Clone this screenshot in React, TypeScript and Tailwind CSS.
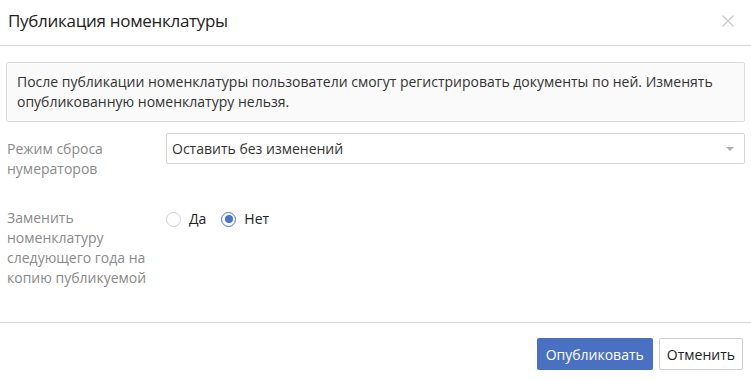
export default function App() {
  return (
    <div
      className="w-[751px] h-[380px] bg-white flex flex-col text-[#333] text-[14px]"
      style={{ fontFamily: '"Open Sans", sans-serif' }}
    >
      {/* Header */}
      <div className="h-[46px] shrink-0 flex items-center justify-between pl-[8px] pr-[17px] border-b border-[#dcdcdc]">
        <span className="text-[17px] tracking-[-0.3px] text-[#222] pb-[4px]">Публикация номенклатуры</span>
        <svg width="12" height="12" viewBox="0 0 12 12" className="-mt-[4px]">
          <path d="M0.5 0.5 L11.5 11.5 M11.5 0.5 L0.5 11.5" stroke="#c8c8c8" strokeWidth="1.1" fill="none" />
        </svg>
      </div>

      {/* Body */}
      <div className="flex-1 flex flex-col px-[6px] pt-[16px]">
        <div className="bg-[#fafafa] border border-[#dcdcdc] rounded-[2px] px-[10px] py-[9px] leading-[20px]">
          После публикации номенклатуры пользователи смогут регистрировать документы по ней. Изменять опубликованную номенклатуру нельзя.
        </div>

        <div className="flex mt-[11px]">
          <div className="w-[160px] pl-[1px] pt-[6px] leading-[20px] text-[#8a8a8a]">
            Режим сброса
            <br />
            нумераторов
          </div>
          <div className="flex-1 h-[31px] border border-[#d6d6d6] rounded-[2px] flex items-center justify-between pl-[5px] pr-[10px]">
            <span>Оставить без изменений</span>
            <span className="w-0 h-0 border-l-[4px] border-r-[4px] border-t-[4px] border-l-transparent border-r-transparent border-t-[#b0b0b0]" />
          </div>
        </div>

        <div className="flex mt-[29px]">
          <div className="w-[160px] pl-[1px] leading-[20px] text-[#8a8a8a]">
            Заменить
            <br />
            номенклатуру
            <br />
            следующего года на
            <br />
            копию публикуемой
          </div>
          <div className="flex items-start gap-[15px] leading-[20px] pt-[1px]">
            <label className="flex items-center gap-[8px]">
              <span className="w-[15px] h-[15px] rounded-full border border-[#d0d0d0] bg-white" />
              <span className="text-[#222]">Да</span>
            </label>
            <label className="flex items-center gap-[8px]">
              <span className="w-[15px] h-[15px] rounded-full border border-[#4a74c9] bg-white flex items-center justify-center">
                <span className="w-[8px] h-[8px] rounded-full bg-[#4a74c9]" />
              </span>
              <span className="text-[#222]">Нет</span>
            </label>
          </div>
        </div>
      </div>

      {/* Footer */}
      <div className="h-[58px] shrink-0 border-t border-[#dcdcdc] flex items-center justify-end gap-[6px] pr-[8px] pt-[5px]">
        <button className="h-[32px] px-[9px] rounded-[2px] bg-[#4a71c1] text-white text-[14px]">Опубликовать</button>
        <button className="h-[32px] px-[7px] rounded-[2px] border border-[#d0d0d0] bg-white text-[#222] text-[14px]">Отменить</button>
      </div>
    </div>
  );
}
